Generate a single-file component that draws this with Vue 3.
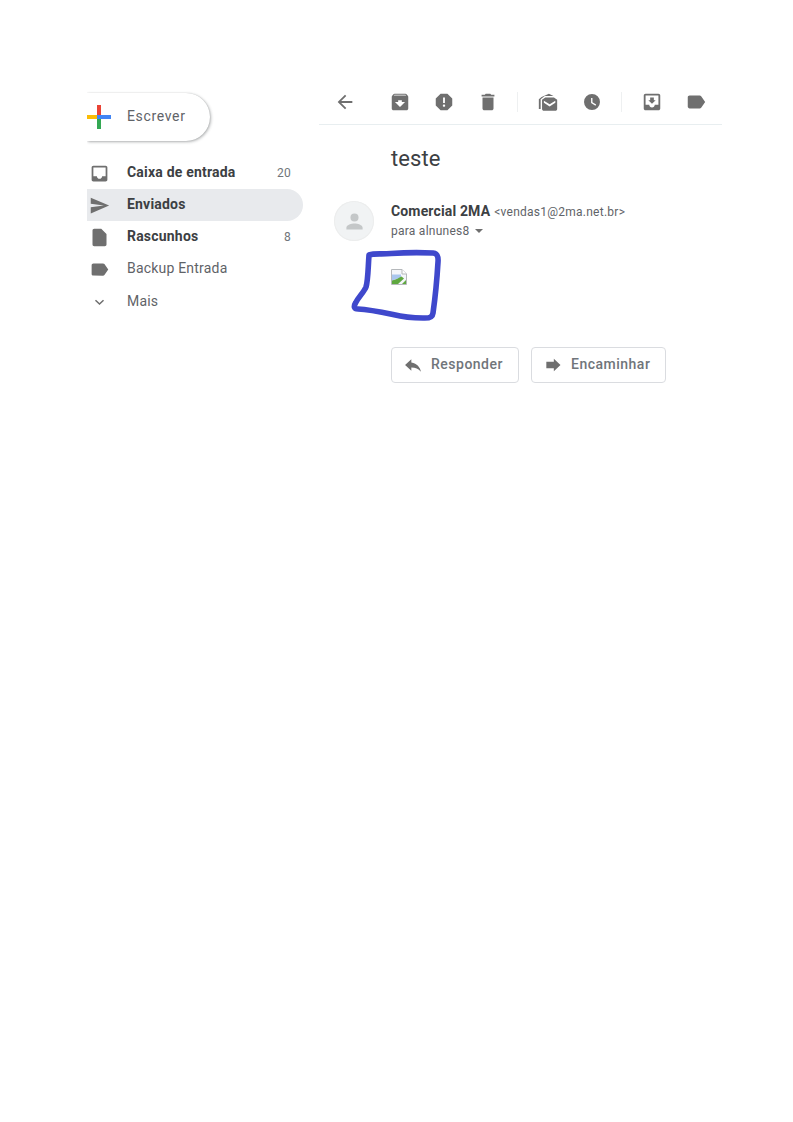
<template>
  <div class="page">
    <aside class="sidebar">
      <button class="compose">
        <svg class="plus" viewBox="0 0 24 24" width="24" height="24">
          <rect x="0" y="10" width="10" height="4" fill="#fbbc05" />
          <rect x="10" y="0" width="4" height="12" fill="#ea4335" />
          <rect x="10" y="14" width="4" height="10" fill="#34a853" />
          <rect x="10" y="10" width="14" height="4" fill="#4285f4" />
        </svg>
        <span class="compose-label">Escrever</span>
      </button>

      <ul class="nav">
        <li v-for="item in navItems" :key="item.label" class="nav-item" :class="{ active: item.active, bold: item.bold }">
          <svg class="nav-icon" viewBox="0 0 24 24">
            <path :d="item.icon" fill="#6f6f6f" />
          </svg>
          <span class="nav-label">{{ item.label }}</span>
          <span v-if="item.count" class="nav-count">{{ item.count }}</span>
        </li>
      </ul>
    </aside>

    <main class="main">
      <div class="toolbar">
        <svg class="tool back" viewBox="0 0 24 24"><path :d="icons.back" /></svg>
        <div class="tool-group first">
          <svg v-for="d in groupOne" :key="d" class="tool" viewBox="0 0 24 24"><path :d="d" fill-rule="evenodd" /></svg>
        </div>
        <span class="sep"></span>
        <div class="tool-group">
          <svg v-for="d in groupTwo" :key="d" class="tool" viewBox="0 0 24 24"><path :d="d" fill-rule="evenodd" /></svg>
        </div>
        <span class="sep"></span>
        <div class="tool-group">
          <svg v-for="d in groupThree" :key="d" class="tool" viewBox="0 0 24 24"><path :d="d" fill-rule="evenodd" /></svg>
        </div>
      </div>

      <h1 class="subject">teste</h1>

      <div class="message">
        <div class="avatar">
          <svg viewBox="0 0 24 24" width="27" height="27"><path d="M12 12a3.600 3.600 0 1 0 0-7.200a3.600 3.600 0 0 0 0 7.200zm0 1.800c-2.700 0-7.200 1.300-7.200 3.600v1.800h14.400v-1.800c0-2.300-4.500-3.600-7.200-3.600z" fill="#c4c7c8" /></svg>
        </div>
        <div class="message-body">
          <div class="sender">
            <span class="sender-name">Comercial 2MA</span>
            <span class="sender-mail">&lt;vendas1@2ma.net.br&gt;</span>
          </div>
          <div class="recipient">
            para alnunes8
            <span class="caret"></span>
          </div>

          <div class="content">
            <svg class="broken" viewBox="0 0 16 16" width="16" height="16">
              <path d="M0.500 0.500H11L15.500 5V15.500H0.500Z" fill="#f4f6fa" stroke="#b5b8bb" />
              <path d="M11 0.500V5H15.500" fill="#fff" stroke="#b5b8bb" />
              <path d="M1 5.500h9v3l-9 3z" fill="#a9c6ee" />
              <path d="M1 15V11.500C5 10.500 8 9 10.500 7.500L13 9.500L7 15Z" fill="#5fa83f" />
              <path d="M11 15L15 11V15Z" fill="#5fa83f" />
            </svg>
            <svg class="scribble" viewBox="0 0 90 76" width="90" height="76">
              <path d="M18 6C24 4 30 5.500 40 4.500C55 3.500 70 3.500 82 4C86 4.500 87.500 7 87 13C86 30 84 50 82 64C81.500 68 79 69.500 72 69C62 69 52 68 42 65.500C30 63 18 60.500 7 60C3 60 2.500 57.500 4.500 54C7.500 48 13 43 15 38C17 32 17 20 18 6Z" fill="none" stroke="#3f48cc" stroke-width="5.600" stroke-linejoin="round" stroke-linecap="round" />
            </svg>
          </div>

          <div class="actions">
            <button class="action">
              <svg viewBox="0 0 24 24" width="20" height="20"><path d="M10 9V5l-7.500 7 7.500 7v-4.100c5 0 8.500 1.600 11.500 5.100-1-5-4.500-10-11.500-11z" fill="#6f6f6f" /></svg>
              <span class="action-label">Responder</span>
            </button>
            <button class="action">
              <svg viewBox="0 0 24 24" width="20" height="20"><path d="M13 4.500l8 7.500-8 7.500v-3.500H4V8h9z" fill="#6f6f6f" /></svg>
              <span class="action-label">Encaminhar</span>
            </button>
          </div>
        </div>
      </div>
    </main>
  </div>
</template>

<script setup>
const icons = {
  back: 'M20 11H7.830l5.590-5.590L12 4l-8 8 8 8 1.410-1.410L7.830 13H20z',
  archive: 'M20.540 5.230L19.150 3.550C18.880 3.210 18.470 3 18 3H6c-.470 0-.880.210-1.160.550L3.460 5.230C3.170 5.570 3 6.020 3 6.500V19c0 1.100.900 2 2 2h14c1.100 0 2-.900 2-2V6.500c0-.480-.170-.930-.460-1.270zM12 17.500L6.500 12H10v-2h4v2h3.500L12 17.500zM5.120 5l.810-1h12l.940 1H5.120z',
  spam: 'M15.730 3H8.270L3 8.270v7.460L8.270 21h7.460L21 15.730V8.270L15.730 3zM12 17.300c-.720 0-1.300-.580-1.300-1.300 0-.720.580-1.300 1.300-1.300.720 0 1.300.580 1.300 1.300 0 .720-.580 1.300-1.300 1.300zm1-4.300h-2V7h2v6z',
  trash: 'M6 19c0 1.100.900 2 2 2h8c1.100 0 2-.900 2-2V7H6v12zM19 4h-3.500l-1-1h-5l-1 1H5v2h14V4z',
  mailOpen: 'M2 9L5 6.500L13 3L18 5.500H8.500L4 9V19.500H2ZM5.500 9.500L9 7H18.500L22 9.500V19.500C22 20.600 21.100 21.500 20 21.500H7.500C6.400 21.500 5.500 20.600 5.500 19.500ZM7.500 10.500L13.800 14.500L20 10.500V12.800L13.800 16.800L7.500 12.800Z',
  clock: 'M12 3.300a8.700 8.700 0 1 0 0 17.400 8.700 8.700 0 0 0 0-17.400zm3.800 12.800L11 13.200V7.500h1.500v4.900l4 2.400z',
  moveTo: 'M19 3H4.990C3.890 3 3 3.900 3 5v14c0 1.100.890 2 1.990 2H19c1.100 0 2-.900 2-2V5c0-1.100-.900-2-2-2zm0 12h-4c0 1.660-1.350 3-3 3s-3-1.340-3-3H4.990V5H19v10zm-3-5h-2V7h-4v3H8l4 4 4-4z',
  label: 'M17.630 5.840C17.270 5.330 16.670 5 16 5L5 5.010C3.900 5.010 3 5.900 3 7v10c0 1.100.900 1.990 2 1.990L16 19c.670 0 1.270-.330 1.630-.840L22 12l-4.370-6.160z'
}

const groupOne = [icons.archive, icons.spam, icons.trash]
const groupTwo = [icons.mailOpen, icons.clock]
const groupThree = [icons.moveTo, icons.label]

const navItems = [
  { label: 'Caixa de entrada', count: '20', bold: true, icon: 'M19 3H4.990C3.880 3 3 3.900 3 5v14c0 1.100.880 2 1.990 2H19c1.100 0 2-.900 2-2V5c0-1.100-.900-2-2-2zm0 12h-4c0 1.660-1.350 3-3 3s-3-1.340-3-3H4.990V5H19v10z' },
  { label: 'Enviados', active: true, bold: true, icon: 'M2.010 21L23 12 2.010 3 2 10l15 2-15 2z' },
  { label: 'Rascunhos', count: '8', bold: true, icon: 'M14 2H6c-1.100 0-1.990.900-1.990 2L4 20c0 1.100.890 2 1.990 2H18c1.100 0 2-.900 2-2V8l-6-6z' },
  { label: 'Backup Entrada', icon: icons.label },
  { label: 'Mais', icon: 'M8 10L12 13.800L16 10L17.200 11.200L12 16L6.800 11.200Z' }
]
</script>

<style scoped>
.page {
  display: flex;
  align-items: flex-start;
  padding: 80px 0 0 87px;
  font-family: Roboto, "Liberation Sans", sans-serif;
  color: #3c4043;
}

.sidebar {
  width: 216px;
  flex-shrink: 0;
  overflow: hidden;
  padding-bottom: 8px;
}

.compose {
  display: flex;
  align-items: center;
  width: 123px;
  height: 48px;
  margin-top: 13px;
  padding: 0 0 0 40px;
  border: none;
  border-radius: 0 24px 24px 0;
  background: #fff;
  box-shadow: 1px 1px 3px rgba(60, 64, 67, 0.4), 0 0 1px rgba(60, 64, 67, 0.25);
  font-family: Roboto, sans-serif;
  font-size: 14px;
  letter-spacing: 0.65px;
  color: #5f6368;
  position: relative;
}

.compose-label {
  padding-bottom: 2px;
}

.plus {
  position: absolute;
  left: 0;
  top: 12px;
}

.nav {
  list-style: none;
  margin: 16px 0 0;
  padding: 0;
}

.nav-item {
  display: flex;
  align-items: center;
  height: 32px;
  padding: 0 12px 0 0;
  border-radius: 0 16px 16px 0;
  font-size: 14px;
  letter-spacing: 0.2px;
  color: #5f6368;
}

.nav-item.bold {
  font-weight: 700;
  color: #3c4043;
}

.nav-item.active {
  background: #e8eaed;
}

.nav-icon {
  width: 21px;
  height: 21px;
  margin: 0 1.5px;
  flex-shrink: 0;
}

.nav-label {
  margin-left: 16px;
  padding-bottom: 2px;
  flex: 1;
}

.nav-item:last-child .nav-label {
  padding-bottom: 0;
}

.nav-count {
  font-size: 12px;
  font-weight: 400;
  color: #70757a;
}

.main {
  width: 403px;
  margin-left: 16px;
}

.toolbar {
  display: flex;
  align-items: center;
  height: 44px;
  padding-left: 15px;
  border-bottom: 1px solid #e8eef0;
}

.tool {
  width: 22px;
  height: 22px;
  fill: #6f6f6f;
  flex-shrink: 0;
}

.tool-group {
  display: flex;
  gap: 22px;
}

.tool-group.first {
  margin-left: 33px;
}

.sep {
  width: 1px;
  height: 20px;
  margin: 0 19px 0 18px;
  background: #eef0f1;
}

.subject {
  margin: 21px 0 0 72px;
  font-size: 22px;
  line-height: 26px;
  font-weight: 400;
  color: #3c4043;
  letter-spacing: 0.1px;
}

.message {
  display: flex;
  margin-top: 29px;
  padding-left: 15px;
}

.avatar {
  display: flex;
  align-items: center;
  justify-content: center;
  width: 40px;
  height: 40px;
  border-radius: 50%;
  background: #f1f3f4;
  box-shadow: inset 0 0 0 1px #eceded;
}

.message-body {
  margin-left: 17px;
  flex: 1;
}

.sender {
  display: flex;
  align-items: baseline;
  gap: 4px;
  margin-top: 2px;
  height: 18px;
}

.sender-name {
  font-size: 14px;
  font-weight: 700;
  letter-spacing: 0.15px;
  color: #3c4043;
}

.sender-mail {
  font-size: 12px;
  letter-spacing: 0.25px;
  color: #5f6368;
}

.recipient {
  display: flex;
  align-items: center;
  margin-top: 1px;
  height: 18px;
  font-size: 12px;
  letter-spacing: 0.25px;
  color: #5f6368;
}

.caret {
  width: 0;
  height: 0;
  margin-left: 6px;
  border-left: 4px solid transparent;
  border-right: 4px solid transparent;
  border-top: 4px solid #6f6f6f;
}

.content {
  position: relative;
  height: 16px;
  margin-top: 29px;
}

.broken {
  display: block;
}

.scribble {
  position: absolute;
  left: -40px;
  top: -20px;
}

.actions {
  display: flex;
  gap: 12px;
  margin-top: 62px;
}

.action {
  display: flex;
  align-items: center;
  gap: 8px;
  height: 36px;
  padding: 0 15px 0 11px;
  border: 1px solid #dadce0;
  border-radius: 4px;
  background: #fff;
  font-family: Roboto, sans-serif;
  font-size: 14px;
  font-weight: 500;
  letter-spacing: 0.5px;
  color: #70757a;
}

.action-label {
  padding-bottom: 2px;
}
</style>

<style>
html,
body {
  background: #fff;
}
</style>
